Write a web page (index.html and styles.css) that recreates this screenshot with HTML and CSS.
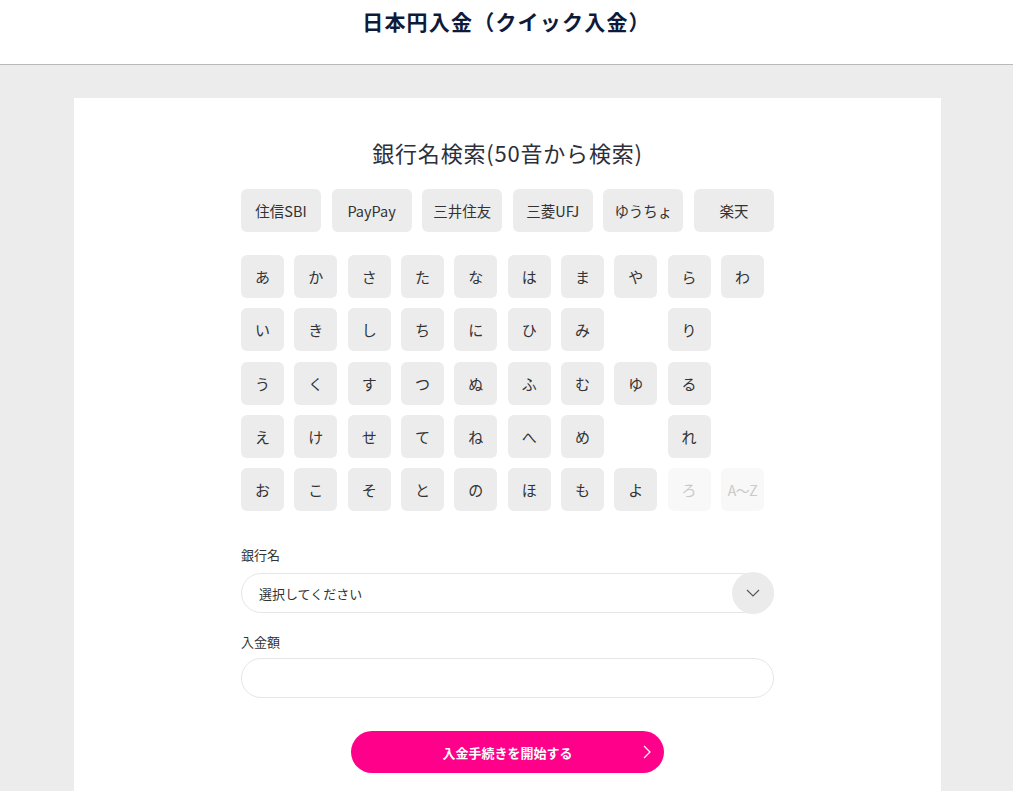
FILE: index.html
```html
<!DOCTYPE html>
<html lang="ja">
<head>
<meta charset="utf-8">
<title>日本円入金（クイック入金）</title>
<link rel="stylesheet" href="styles.css">
</head>
<body>
<header class="topbar">
  <h1 class="page-title">日本円入金（クイック入金）</h1>
</header>
<main class="main">
  <section class="card">
    <div class="inner">
      <h2 class="search-title">銀行名検索(50音から検索)</h2>
      <div class="banks">
        <button class="bank">住信SBI</button>
        <button class="bank">PayPay</button>
        <button class="bank">三井住友</button>
        <button class="bank">三菱UFJ</button>
        <button class="bank">ゆうちょ</button>
        <button class="bank">楽天</button>
      </div>
      <div class="kana">
        <button class="k">あ</button><button class="k">か</button><button class="k">さ</button><button class="k">た</button><button class="k">な</button><button class="k">は</button><button class="k">ま</button><button class="k">や</button><button class="k">ら</button><button class="k">わ</button>
        <button class="k">い</button><button class="k">き</button><button class="k">し</button><button class="k">ち</button><button class="k">に</button><button class="k">ひ</button><button class="k">み</button><span class="k-empty"></span><button class="k">り</button><span class="k-empty"></span>
        <button class="k">う</button><button class="k">く</button><button class="k">す</button><button class="k">つ</button><button class="k">ぬ</button><button class="k">ふ</button><button class="k">む</button><button class="k">ゆ</button><button class="k">る</button><span class="k-empty"></span>
        <button class="k">え</button><button class="k">け</button><button class="k">せ</button><button class="k">て</button><button class="k">ね</button><button class="k">へ</button><button class="k">め</button><span class="k-empty"></span><button class="k">れ</button><span class="k-empty"></span>
        <button class="k">お</button><button class="k">こ</button><button class="k">そ</button><button class="k">と</button><button class="k">の</button><button class="k">ほ</button><button class="k">も</button><button class="k">よ</button><button class="k disabled">ろ</button><button class="k disabled az">A～Z</button>
      </div>
      <div class="field field-bank">
        <label class="label">銀行名</label>
        <div class="select">
          <span class="select-text">選択してください</span>
          <span class="select-arrow">
            <svg width="14" height="8" viewBox="0 0 14 8"><path d="M1 1 L7 7 L13 1" fill="none" stroke="#555" stroke-width="1.1"/></svg>
          </span>
        </div>
      </div>
      <div class="field field-amount">
        <label class="label">入金額</label>
        <div class="input"></div>
      </div>
      <div class="submit-wrap">
        <button class="submit">
          <span>入金手続きを開始する</span>
          <svg class="submit-arrow" width="8" height="14" viewBox="0 0 8 14"><path d="M1 1 L7 7 L1 13" fill="none" stroke="#fff" stroke-width="1.2"/></svg>
        </button>
      </div>
    </div>
  </section>
</main>
</body>
</html>
```
FILE: styles.css
```css
* { box-sizing: border-box; }
html, body { margin: 0; padding: 0; }
body {
  font-family: "Noto Sans CJK JP", "Noto Sans", sans-serif;
  color: #333;
  background: #ececec;
  height: 791px;
  overflow: hidden;
}
button { font-family: inherit; border: none; padding: 0; cursor: pointer; }

.topbar {
  height: 65px;
  background: #fff;
  border-bottom: 1px solid #b9b9b9;
  display: flex;
  justify-content: center;
}
.page-title {
  margin: 6px 0 0;
  font-size: 21px;
  line-height: 30px;
  font-weight: 700;
  color: #0e1a3a;
  letter-spacing: 1.2px;
}

.main {
  padding: 33px 72px 0 74px;
}
.card {
  background: #fff;
  height: 720px;
}
.inner {
  width: 533px;
  margin: 0 auto;
  padding-top: 38px;
}
.search-title {
  margin: 0;
  text-align: center;
  font-size: 22px;
  line-height: 32px;
  font-weight: 400;
  color: #2d2f3a;
  letter-spacing: 0.8px;
}

.banks {
  margin-top: 21px;
  display: grid;
  grid-template-columns: repeat(6, 80px);
  justify-content: space-between;
}
.bank {
  height: 43px;
  background: #ececec;
  border-radius: 6px;
  font-size: 14.5px;
  color: #333;
}

.kana {
  margin-top: 23px;
  display: grid;
  grid-template-columns: repeat(10, 43px);
  grid-auto-rows: 43px;
  column-gap: 10.33px;
  row-gap: 10.33px;
}
.k {
  background: #ececec;
  border-radius: 6px;
  font-size: 15px;
  color: #333;
}
.k.disabled {
  background: #f8f8f8;
  color: #c9c9c9;
}
.k.az { font-size: 14px; letter-spacing: -0.5px; }

.field-bank { margin-top: 35px; }
.field-amount { margin-top: 20px; }
.label {
  display: block;
  font-size: 13px;
  line-height: 18px;
  color: #333;
  margin-bottom: 9px;
}
.field-amount .label { margin-bottom: 7px; }

.select {
  height: 40px;
  border: 1px solid #e6e6e6;
  border-radius: 20px;
  display: flex;
  align-items: center;
  justify-content: space-between;
  position: relative;
}
.select-text {
  padding-left: 17px;
  font-size: 13px;
  color: #333;
}
.select-arrow {
  width: 42px;
  height: 42px;
  border-radius: 50%;
  background: #ebebeb;
  display: flex;
  align-items: center;
  justify-content: center;
  margin-right: -1px;
}
.input {
  height: 40px;
  border: 1px solid #e6e6e6;
  border-radius: 20px;
}

.submit-wrap {
  margin-top: 33px;
  display: flex;
  justify-content: center;
}
.submit {
  width: 313px;
  height: 42px;
  border-radius: 21px;
  background: #ff008a;
  color: #fff;
  font-size: 13px;
  font-weight: 700;
  position: relative;
  display: flex;
  align-items: center;
  justify-content: center;
}
.submit-arrow {
  position: absolute;
  right: 13px;
  top: 14px;
}
```
